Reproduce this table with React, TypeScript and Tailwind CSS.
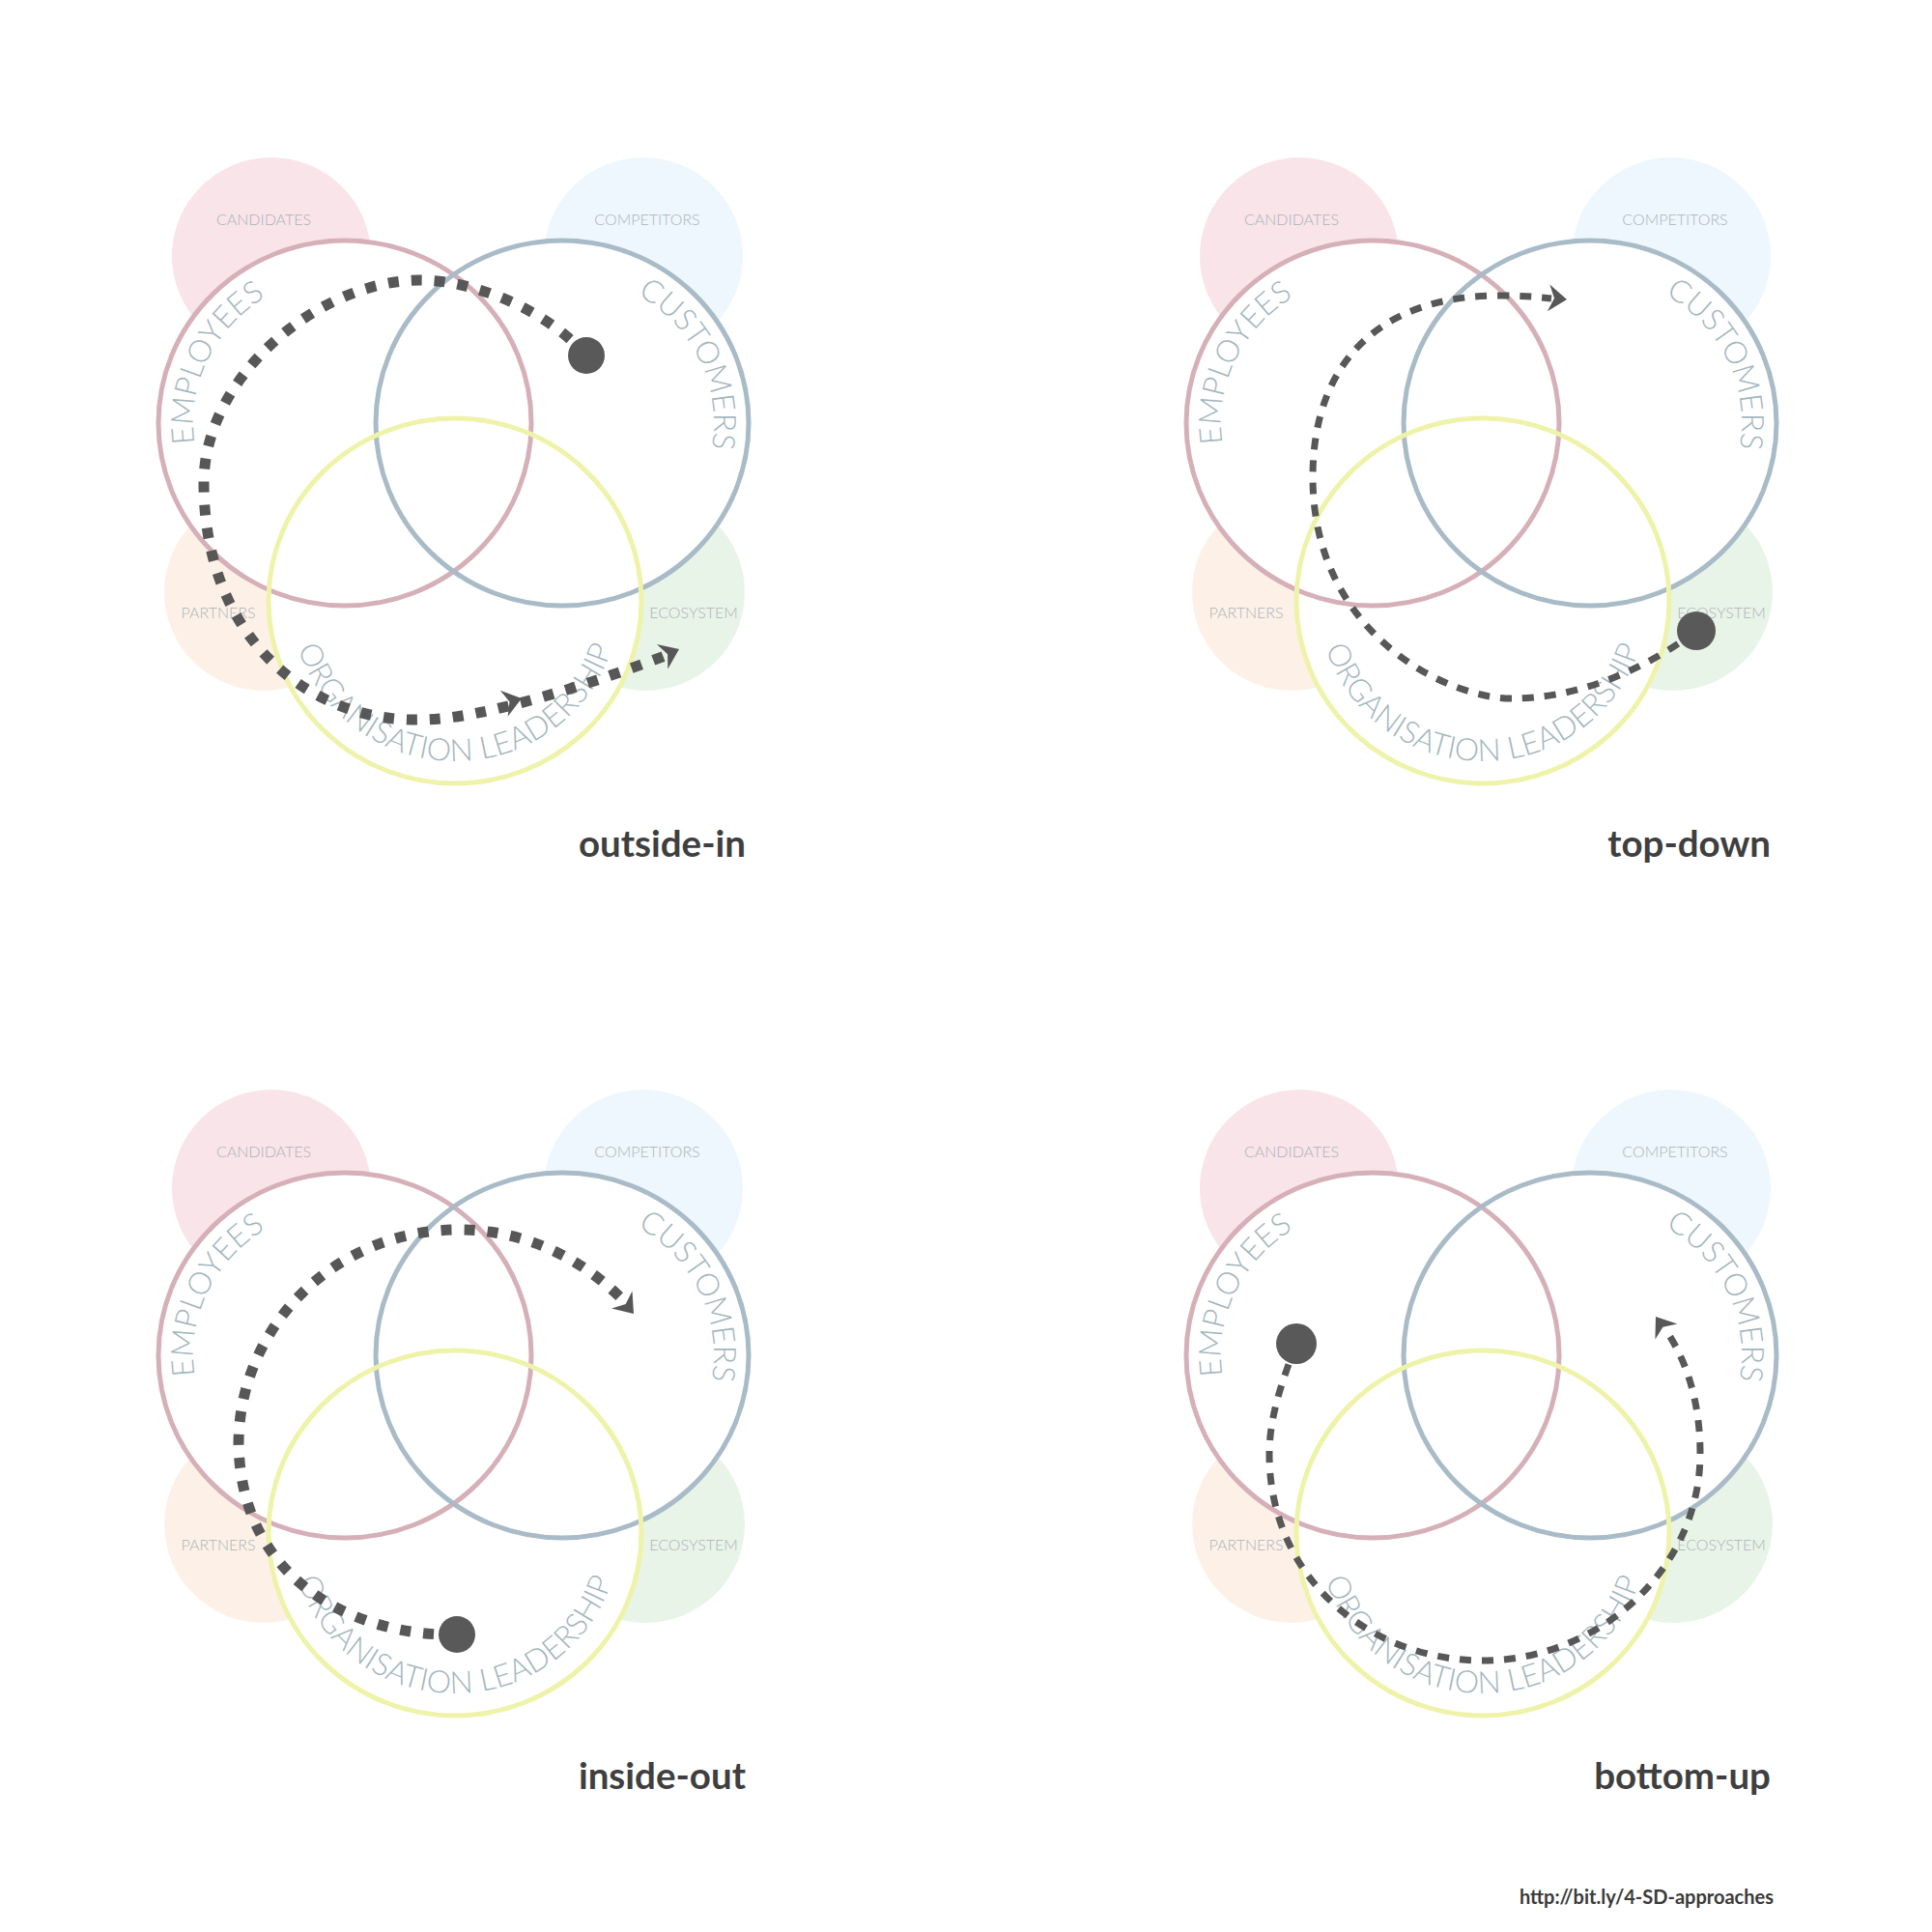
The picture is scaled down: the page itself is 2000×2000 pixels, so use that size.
import React from "react";

type Variant = "outside-in" | "top-down" | "inside-out" | "bottom-up";

const RX = 193;
const RY = 189;
const EMP = { x: 357, y: 438 };
const CUS = { x: 582, y: 438 };
const ORG = { x: 471, y: 622 };

function arc(cx: number, cy: number, rx: number, ry: number, a1: number, a2: number, sweep: 0 | 1) {
  const r = (d: number) => (d * Math.PI) / 180;
  const x1 = cx + rx * Math.cos(r(a1));
  const y1 = cy + ry * Math.sin(r(a1));
  const x2 = cx + rx * Math.cos(r(a2));
  const y2 = cy + ry * Math.sin(r(a2));
  const large = Math.abs(a2 - a1) > 180 ? 1 : 0;
  return `M ${x1.toFixed(2)} ${y1.toFixed(2)} A ${rx} ${ry} 0 ${large} ${sweep} ${x2.toFixed(2)} ${y2.toFixed(2)}`;
}

const FLOWS: Record<
  Variant,
  {
    d: string;
    thick: boolean;
    dot: [number, number, number];
    arrows: [number, number, number][];
  }
> = {
  "outside-in": {
    d: "M 607 368 C 565 320 490 290 435 290 C 330 290 211 390 211 500 C 211 660 320 748 436 745 C 500 745 620 705 688 679",
    thick: true,
    dot: [607, 368, 19],
    arrows: [
      [540, 723, -16],
      [703, 672, -24],
    ],
  },
  "top-down": {
    d: "M 692 653 C 630 700 560 723 503 723 C 440 725 295 660 295 494 C 295 370 370 306 488 306 C 510 306 525 307 542 309",
    thick: false,
    dot: [692, 653, 20],
    arrows: [[558, 310, 5]],
  },
  "inside-out": {
    d: "M 473 727 C 380 730 250 680 247 530 C 247 410 345 308 475 308 C 540 308 600 335 645 381",
    thick: true,
    dot: [473, 727, 19],
    arrows: [[656, 395, 50]],
  },
  "bottom-up": {
    d: "M 278 426 C 265 460 250 500 250 540 C 250 670 355 754 471 754 C 590 754 696 660 696 540 C 696 490 684 448 662 414",
    thick: false,
    dot: [278, 426, 21],
    arrows: [[650, 398, -125]],
  },
};

function Diagram({ variant }: { variant: Variant }) {
  const id = variant;
  const flow = FLOWS[variant];
  const empPath = arc(EMP.x, EMP.y, RX - 36, RY - 36, 140, 270, 1);
  const cusPath = arc(CUS.x, CUS.y, RX - 36, RY - 36, -90, 40, 1);
  const orgPath = arc(ORG.x, ORG.y, RX - 23, RY - 23, 195, -15, 0);
  const curved = {
    fill: "#a3b6bd",
    fontSize: 32,
    fontWeight: 300,
    fontFamily: "Lato, 'Noto Sans', sans-serif",
  } as const;
  const small = {
    fill: "#abb3b8",
    fontSize: 16,
    fontWeight: 300,
    fontFamily: "Lato, 'Noto Sans', sans-serif",
    textAnchor: "middle",
  } as const;
  return (
    <svg width={670} height={710} viewBox="120 120 670 710" className="block">
      <defs>
        <path id={`${id}-emp`} d={empPath} />
        <path id={`${id}-cus`} d={cusPath} />
        <path id={`${id}-org`} d={orgPath} />
      </defs>
      {/* outer soft circles */}
      <ellipse cx={281} cy={265} rx={103} ry={102} fill="#f9e4e9" />
      <ellipse cx={666} cy={265} rx={103} ry={102} fill="#eef7fd" />
      <ellipse cx={273} cy={613} rx={103} ry={102} fill="#fdf1e7" />
      <ellipse cx={668} cy={613} rx={103} ry={102} fill="#e9f4e8" />
      <text x={273} y={233} {...small}>CANDIDATES</text>
      <text x={670} y={233} {...small}>COMPETITORS</text>
      <text x={226} y={640} {...small}>PARTNERS</text>
      <text x={718} y={640} {...small}>ECOSYSTEM</text>
      {/* white interiors */}
      <ellipse cx={EMP.x} cy={EMP.y} rx={RX} ry={RY} fill="#ffffff" />
      <ellipse cx={CUS.x} cy={CUS.y} rx={RX} ry={RY} fill="#ffffff" />
      <ellipse cx={ORG.x} cy={ORG.y} rx={RX} ry={RY} fill="#ffffff" />
      {/* rings */}
      <ellipse cx={EMP.x} cy={EMP.y} rx={RX} ry={RY} fill="none" stroke="#d6b0b8" strokeWidth={5} />
      <ellipse cx={CUS.x} cy={CUS.y} rx={RX} ry={RY} fill="none" stroke="#a8bbc7" strokeWidth={5} />
      <ellipse cx={ORG.x} cy={ORG.y} rx={RX} ry={RY} fill="none" stroke="#eef3a9" strokeWidth={5} />
      {/* curved labels */}
      <text {...curved}>
        <textPath href={`#${id}-emp`} startOffset="50%" textAnchor="middle">
          EMPLOYEES
        </textPath>
      </text>
      <text {...curved}>
        <textPath href={`#${id}-cus`} startOffset="50%" textAnchor="middle">
          CUSTOMERS
        </textPath>
      </text>
      <text {...curved}>
        <textPath href={`#${id}-org`} startOffset="50%" textAnchor="middle">
          ORGANISATION LEADERSHIP
        </textPath>
      </text>
      {/* flow */}
      <path
        d={flow.d}
        fill="none"
        stroke="#575757"
        strokeWidth={flow.thick ? 11 : 7}
        strokeDasharray={flow.thick ? "11 13" : "12 11"}
      />
      {flow.arrows.map(([x, y, a], i) => (
        <polygon
          key={i}
          points="0,0 -19,-14 -13,0 -19,14"
          fill="#575757"
          transform={`translate(${x} ${y}) rotate(${a})`}
        />
      ))}
      <circle cx={flow.dot[0]} cy={flow.dot[1]} r={flow.dot[2]} fill="#595959" />
    </svg>
  );
}

function Panel({ variant, right }: { variant: Variant; right?: boolean }) {
  return (
    <div className="flex flex-col">
      <Diagram variant={variant} />
      <div
        className={
          right
            ? "mt-[19px] pr-[21px] text-right text-[38.5px] leading-[1.2] font-bold text-[#3f3f3f]"
            : "mt-[19px] pr-[18px] text-right text-[38.5px] leading-[1.2] font-bold text-[#3f3f3f]"
        }
      >
        {variant}
      </div>
    </div>
  );
}

export default function App() {
  return (
    <div className="w-[2000px] h-[2000px] bg-white flex flex-col pl-[120px] pt-[120px] font-['Lato','Noto_Sans',sans-serif]">
      <div className="grid grid-cols-[670px_670px] gap-x-[394px] gap-y-[190px]">
        <Panel variant="outside-in" />
        <Panel variant="top-down" right />
        <Panel variant="inside-out" />
        <Panel variant="bottom-up" right />
      </div>
      <div className="mt-[91px] flex justify-end pr-[164px] text-[20px] leading-[24px] font-bold text-[#3a3a3a]">
        http://bit.ly/4-SD-approaches
      </div>
    </div>
  );
}
